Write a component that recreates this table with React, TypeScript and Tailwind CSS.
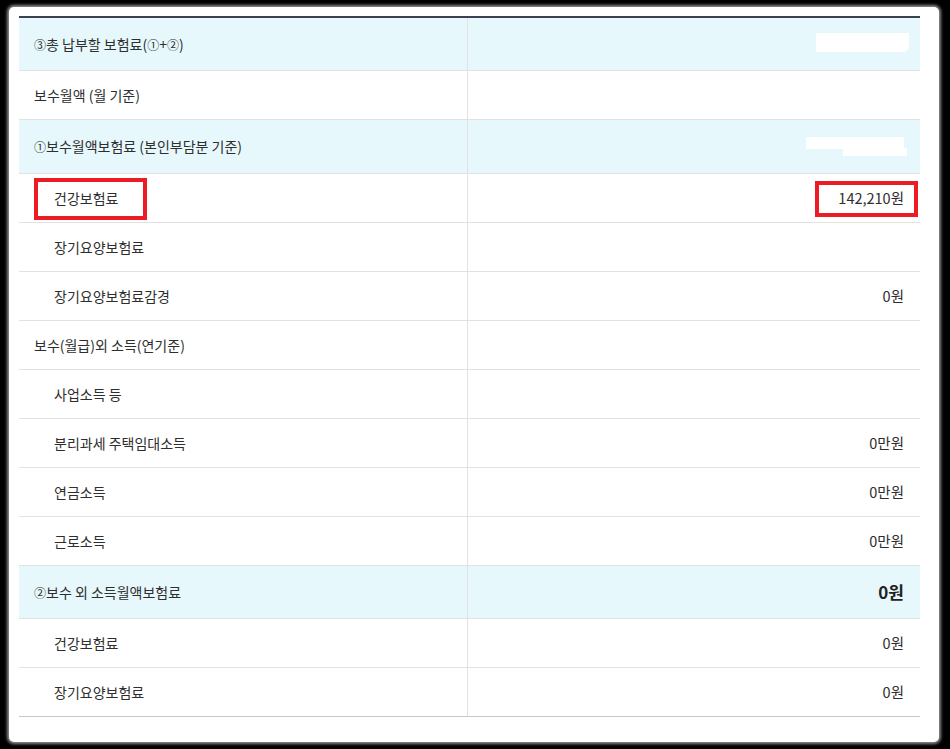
type Row = {
  label: string;
  value?: string;
  tone?: 'head' | 'plain';
  indent?: boolean;
  strong?: boolean;
  h: string;
};

const rows: Row[] = [
  { label: '③총 납부할 보험료(①+②)', tone: 'head', h: 'h-[53px]' },
  { label: '보수월액 (월 기준)', h: 'h-[49px]' },
  { label: '①보수월액보험료 (본인부담분 기준)', tone: 'head', h: 'h-[54px]' },
  { label: '건강보험료', value: '142,210원', indent: true, h: 'h-[49px]' },
  { label: '장기요양보험료', indent: true, h: 'h-[49px]' },
  { label: '장기요양보험료감경', value: '0원', indent: true, h: 'h-[49px]' },
  { label: '보수(월급)외 소득(연기준)', h: 'h-[49px]' },
  { label: '사업소득 등', indent: true, h: 'h-[49px]' },
  { label: '분리과세 주택임대소득', value: '0만원', indent: true, h: 'h-[49px]' },
  { label: '연금소득', value: '0만원', indent: true, h: 'h-[49px]' },
  { label: '근로소득', value: '0만원', indent: true, h: 'h-[49px]' },
  { label: '②보수 외 소득월액보험료', value: '0원', tone: 'head', strong: true, h: 'h-[53px]' },
  { label: '건강보험료', value: '0원', indent: true, h: 'h-[49px]' },
  { label: '장기요양보험료', value: '0원', indent: true, h: 'h-[49px]' },
];

// circled digits render smaller than the hangul in the original
function Label({ text }: { text: string }) {
  return (
    <span>
      {text.split(/([①②③])/).map((part, i) =>
        /[①②③]/.test(part) ? (
          <span key={i} className="text-[12px]">
            {part}
          </span>
        ) : (
          part
        )
      )}
    </span>
  );
}

export default function App() {
  return (
    <div className="min-h-screen bg-black pb-[7px] pl-[9px] pr-[11px] pt-[7px] font-['Noto_Sans_CJK_KR','Noto_Sans',sans-serif]">
      <div className="h-[735px] rounded-[5px] bg-white pl-[10px] pr-[19px] pt-[9px] shadow-[0_0_3px_2px_rgba(255,255,255,0.55)]">
        {/* Insurance breakdown table */}
        <div className="border-t-2 border-[#3d4253]">
          {rows.map((row, i) => (
            <div
              key={i}
              className={`grid grid-cols-[449px_1fr] border-b ${row.h} ${
                i === rows.length - 1 ? 'border-[#c8c8c8]' : 'border-[#e2e2e2]'
              } ${row.tone === 'head' ? 'bg-[#e6f8fc]' : 'bg-white'}`}
            >
              <div
                className={`relative flex items-center border-r border-[#e2e2e2] text-[14px] text-[#2e2e2e] ${
                  row.indent ? 'pl-[35px]' : 'pl-[15px]'
                }`}
              >
                <Label text={row.label} />
                {i === 3 && (
                  <div className="absolute left-[15px] top-[4px] h-[42px] w-[113px] border-4 border-[#ed1c24]" />
                )}
              </div>
              <div className="relative flex items-center justify-end pr-[16px] text-[14.5px] text-[#2e2e2e]">
                {row.value && (
                  <span className={row.strong ? 'text-[17px] font-bold text-[#222]' : ''}>{row.value}</span>
                )}
                {i === 0 && (
                  <div className="absolute right-[11px] top-[15px] h-[19px] w-[93px] rounded-br-[6px] bg-white" />
                )}
                {i === 2 && (
                  <>
                    <div className="absolute right-[16px] top-[17px] h-[12px] w-[98px] bg-white" />
                    <div className="absolute right-[13px] top-[28px] h-[8px] w-[64px] bg-white" />
                  </>
                )}
                {i === 3 && (
                  <div className="absolute right-[2px] top-[7px] h-[36px] w-[103px] border-4 border-[#ed1c24]" />
                )}
              </div>
            </div>
          ))}
        </div>
      </div>
    </div>
  );
}
